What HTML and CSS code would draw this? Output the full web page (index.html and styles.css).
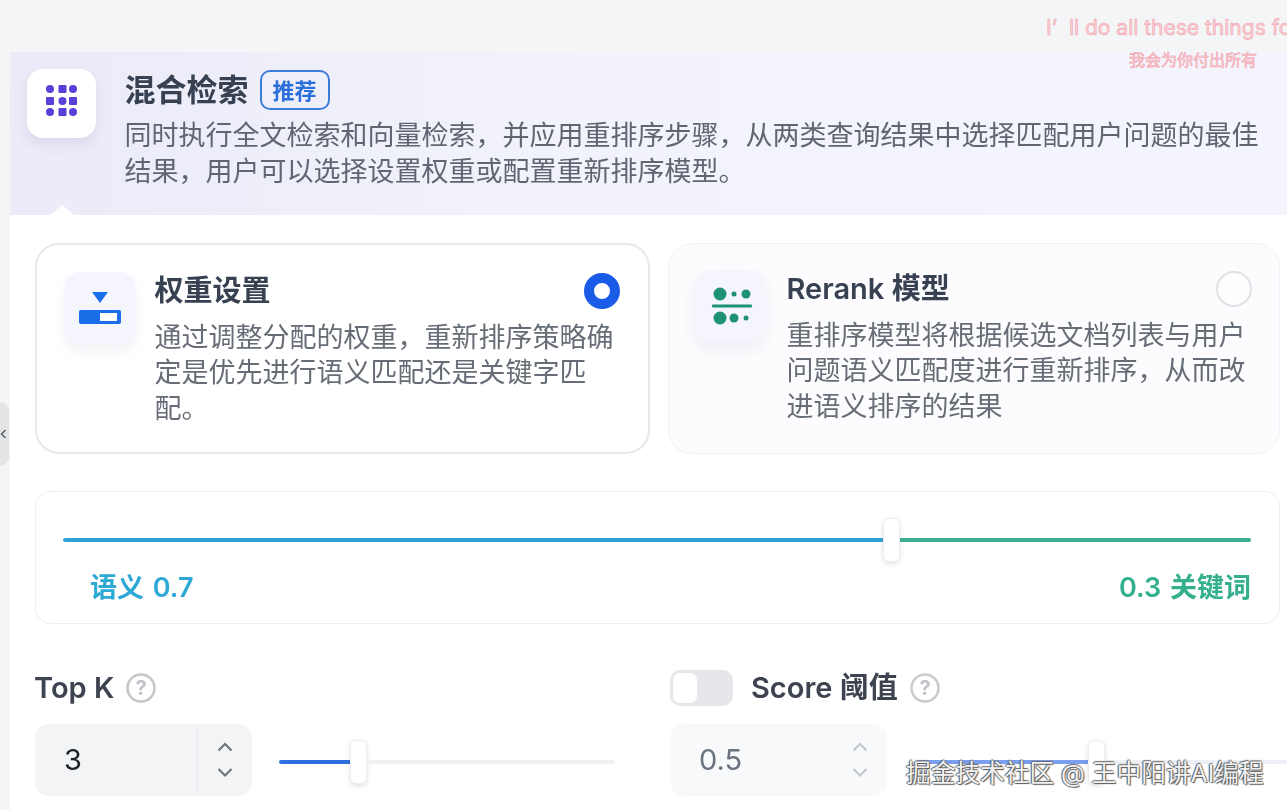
FILE: index.html
```html
<!DOCTYPE html>
<html lang="zh-CN">
<head>
<meta charset="utf-8">
<title>混合检索</title>
<link rel="stylesheet" href="styles.css">
</head>
<body>
<div class="page">
  <div class="topbar"></div>
  <div class="main">
    <div class="gutter"></div>
    <section class="panel">
      <header class="hero">
        <div class="hero-icon">
          <svg width="36" height="36" viewBox="0 0 36 36" fill="#5a3fd8">
            <circle cx="5" cy="5" r="4"/><rect x="13.500" y="1" width="8" height="8" rx="1"/><circle cx="28" cy="5" r="4"/>
            <rect x="1" y="13" width="8" height="8" rx="1"/><circle cx="17.500" cy="17" r="4"/><rect x="24" y="13" width="8" height="8" rx="1"/>
            <circle cx="5" cy="28" r="4"/><rect x="13.500" y="24" width="8" height="8" rx="1"/><circle cx="28" cy="28" r="4"/>
          </svg>
        </div>
        <div class="hero-text">
          <div class="hero-title"><h1>混合检索</h1><span class="badge">推荐</span></div>
          <p class="hero-desc">同时执行全文检索和向量检索，并应用重排序步骤，从两类查询结果中选择匹配用户问题的最佳结果，用户可以选择设置权重或配置重新排序模型。</p>
        </div>
        <span class="notch"></span>
      </header>

      <div class="cards">
        <article class="card card-on">
          <div class="card-icon">
            <svg width="72" height="72" viewBox="0 0 72 72">
              <path d="M28 20h16l-8 11z" fill="#1c6de8"/>
              <rect x="15" y="38" width="42" height="14" rx="2" fill="#1c6de8"/>
              <rect x="36" y="41" width="17" height="8" fill="#fff"/>
            </svg>
          </div>
          <div class="card-body">
            <div class="card-head"><h2>权重设置</h2><span class="radio radio-on"></span></div>
            <p>通过调整分配的权重，重新排序策略确定是优先进行语义匹配还是关键字匹配。</p>
          </div>
        </article>
        <article class="card card-off">
          <div class="card-icon">
            <svg width="72" height="72" viewBox="0 0 72 72" fill="#1e9273">
              <circle cx="26" cy="24" r="6.500"/><circle cx="40" cy="24" r="2.500"/><circle cx="52" cy="24" r="4.500"/>
              <rect x="18" y="34.500" width="40" height="3" rx="1"/>
              <circle cx="26" cy="48" r="6.500"/><circle cx="40" cy="48" r="4.500"/><circle cx="52" cy="48" r="2.500"/>
            </svg>
          </div>
          <div class="card-body">
            <div class="card-head"><h2>Rerank 模型</h2><span class="radio"></span></div>
            <p>重排序模型将根据候选文档列表与用户问题语义匹配度进行重新排序，从而改进语义排序的结果</p>
          </div>
        </article>
      </div>

      <div class="weight">
        <div class="slider">
          <span class="bar fill-sem"></span>
          <span class="thumb"></span>
          <span class="bar rest-key"></span>
        </div>
        <div class="weight-labels">
          <span class="lab-sem">语义 0.7</span>
          <span class="lab-key">0.3 关键词</span>
        </div>
      </div>

      <div class="params">
        <div class="param param-k">
          <div class="param-head">
            <span class="param-name">Top K</span>
            <svg class="help" width="30" height="30" viewBox="0 0 30 30"><circle cx="15" cy="15" r="13.500" fill="none" stroke="#c4c6c9" stroke-width="2.500"/><text x="15" y="21.500" text-anchor="middle" class="help-q">?</text></svg>
          </div>
          <div class="param-ctl">
            <div class="num">
              <span class="num-val">3</span>
              <span class="steps">
                <svg width="16" height="36" viewBox="0 0 16 36" fill="none" stroke="#6b7075" stroke-width="2"><path d="M1.500 8.500L8 2l6.500 6.500M1.500 27L8 33.500 14.500 27"/></svg>
              </span>
            </div>
            <div class="slider slider-k">
              <span class="bar fill-k"></span>
              <span class="thumb"></span>
              <span class="bar rest-k"></span>
            </div>
          </div>
        </div>
        <div class="param param-s">
          <div class="param-head">
            <span class="toggle"><span class="knob"></span></span>
            <span class="param-name">Score 阈值</span>
            <svg class="help" width="30" height="30" viewBox="0 0 30 30"><circle cx="15" cy="15" r="13.500" fill="none" stroke="#c9cbce" stroke-width="2.500"/><text x="15" y="21.500" text-anchor="middle" class="help-q">?</text></svg>
          </div>
          <div class="param-ctl">
            <div class="num num-dis">
              <span class="num-val">0.5</span>
              <span class="steps">
                <svg width="16" height="36" viewBox="0 0 16 36" fill="none" stroke="#c3c7cc" stroke-width="2"><path d="M1.500 8.500L8 2l6.500 6.500M1.500 27L8 33.500 14.500 27"/></svg>
              </span>
            </div>
            <div class="slider slider-s">
              <span class="bar fill-s"></span>
              <span class="thumb"></span>
              <span class="bar rest-s"></span>
            </div>
          </div>
        </div>
      </div>
    </section>
  </div>
</div>
<div class="side-tab"><svg width="8" height="10" viewBox="0 0 8 10" fill="none" stroke="#55585c" stroke-width="1.400"><path d="M5.500 1L1.500 5l4 4"/></svg></div>
<div class="sub sub-en">I’&nbsp;&nbsp;ll do all these things for you</div>
<div class="sub sub-zh">我会为你付出所有</div>
<div class="mark">掘金技术社区 @ 王中阳讲AI编程</div>
</body>
</html>
```

FILE: styles.css
```css
* { box-sizing: border-box; }
html, body { margin: 0; height: 810px; overflow: hidden; }
body {
  position: relative;
  background: #f4f5f7;
  font-family: Inter, "Noto Sans CJK SC", sans-serif;
  color: #374151;
}
h1, h2, p { margin: 0; }

.page { display: flex; flex-direction: column; height: 810px; filter: blur(0.35px); }
.topbar { height: 52px; flex: none; }
.main { display: flex; flex: 1; min-height: 0; }
.gutter { width: 10px; flex: none; }
.panel { flex: 1; min-width: 0; background: #fff; overflow: hidden; }

.hero {
  position: relative;
  display: flex;
  gap: 28.500px;
  height: 163px;
  padding: 17px 20px 0 17px;
  background: linear-gradient(90deg, #ebebf9 0%, #f2f2fb 40%, #f4f5fc 100%);
}
.hero-icon {
  flex: none;
  width: 69px;
  height: 69px;
  display: flex;
  align-items: center;
  justify-content: center;
  background: #fff;
  border-radius: 16px;
  box-shadow: 0 6px 14px rgba(70, 70, 120, 0.12);
}
.hero-icon svg { margin: -3px 0 0 3px; }
.hero-text { flex: 1; min-width: 0; }
.hero-title { display: flex; align-items: center; gap: 11px; height: 40px; margin-top: 1px; }
.hero-title h1 { font-size: 31px; line-height: 40px; font-weight: 700; color: #374151; }
.badge {
  display: flex;
  align-items: center;
  justify-content: center;
  width: 70px;
  height: 40px;
  padding-bottom: 2px;
  border: 2px solid #3f7bd9;
  border-radius: 10px;
  font-size: 22px;
  font-weight: 700;
  color: #2a6fdb;
}
.hero-desc { margin-top: 8px; font-size: 27px; line-height: 36px; color: #5f6671; }
.notch {
  position: absolute;
  left: 40px;
  bottom: 0;
  width: 0;
  height: 0;
  border-left: 12px solid transparent;
  border-right: 12px solid transparent;
  border-bottom: 10px solid #fff;
}

.cards {
  display: grid;
  grid-template-columns: 615px 612px;
  gap: 18px;
  margin: 28px 0 0 25px;
}
.card { display: flex; height: 211px; border-radius: 24px; }
.card-on { border: 2px solid #e6e8eb; background: #fff; padding: 27px 28px 0 27px; gap: 18.500px; }
.card-off { border: 1px solid #f1f2f5; background: #fcfcfe; padding: 26px 27px 0 25px; gap: 20.500px; }
.card-icon {
  flex: none;
  width: 72px;
  height: 72px;
  background: #f5f5fd;
  border-radius: 16px;
  box-shadow: 0 8px 14px rgba(90, 90, 140, 0.07);
}
.card-icon svg { display: block; }
.card-body { flex: 1; min-width: 0; }
.card-head { display: flex; align-items: center; justify-content: space-between; height: 38px; }
.card-head h2 { font-size: 29px; line-height: 38px; font-weight: 600; color: #374151; }
.card-body p { margin-top: 9.500px; font-size: 27px; line-height: 35.500px; color: #676d76; }
.radio {
  flex: none;
  width: 36px;
  height: 36px;
  border-radius: 50%;
  border: 2px solid #e0e2e5;
  background: #fdfdfe;
}
.radio-on { border: 10.500px solid #1a5ce8; background: #fff; }

.weight {
  height: 133px;
  margin: 37px 7px 0 25px;
  padding: 26px 28px 0 27px;
  border: 1px solid #eceef1;
  border-radius: 16px;
  background: #fff;
}
.slider { display: flex; align-items: center; height: 44px; }
.bar { display: block; height: 4px; }
.thumb {
  flex: none;
  width: 17px;
  height: 44px;
  background: #fff;
  border: 1px solid #eceef1;
  border-radius: 6px;
  box-shadow: 0 2px 5px rgba(0, 0, 0, 0.12);
}
.fill-sem { flex: none; width: 820px; background: #2fa3d6; border-radius: 2px 0 0 2px; }
.rest-key { flex: 1; background: #3aae90; border-radius: 0 2px 2px 0; }
.weight-labels {
  display: flex;
  justify-content: space-between;
  margin-top: 8px;
  padding-left: 27px;
  font-size: 27px;
  line-height: 36px;
  font-weight: 600;
  word-spacing: 2px;
}
.lab-sem { color: #2ea8d5; }
.lab-key { color: #35b08f; }

.params { display: flex; margin: 46px 0 0 25px; }
.param { flex: none; }
.param-k { width: 635px; }
.param-s { width: 640px; }
.param-head { display: flex; align-items: center; height: 36px; }
.param-name { font-size: 29px; line-height: 36px; font-weight: 600; color: #3d4450; }
.param-k .param-name { margin-left: -1px; }
.help { flex: none; margin-left: 12px; }
.help-q { font-family: Inter, sans-serif; font-size: 20px; font-weight: 700; fill: #bfc2c6; }
.toggle {
  flex: none;
  display: flex;
  align-items: center;
  width: 63px;
  height: 36px;
  margin-right: 18px;
  padding: 0 3px;
  background: #e5e7eb;
  border-radius: 10px;
}
.knob { width: 24px; height: 30px; background: #fff; border-radius: 7px; }
.param-ctl { display: flex; align-items: center; gap: 27px; margin-top: 18px; }
.num {
  flex: none;
  display: flex;
  align-items: stretch;
  width: 217px;
  height: 72px;
  background: #f2f4f6;
  border-radius: 14px;
}
.num-val { flex: 1; padding-left: 29px; font-size: 29px; line-height: 72px; color: #1f2328; }
.steps {
  flex: none;
  display: flex;
  align-items: center;
  justify-content: center;
  width: 55px;
  border-left: 1px solid #e8eaed;
}
.num-dis { background: #f8f9fb; }
.num-dis .num-val { color: #6b7280; }
.num-dis .steps { border-left-color: #f8f9fb; }
.slider-k { flex: none; width: 336px; margin-top: 4px; }
.fill-k { flex: none; width: 71px; background: #2f6fe0; border-radius: 2px 0 0 2px; }
.rest-k { flex: 1; background: #f0f1f3; }
.slider-s { flex: none; width: 370px; margin: 4px 0 0 3px; }
.fill-s { flex: none; width: 171px; background: #7a9fee; }
.rest-s { flex: 1; background: #edf0f5; }

.side-tab {
  position: absolute;
  left: 0;
  top: 402px;
  width: 9px;
  height: 64px;
  display: flex;
  align-items: center;
  background: #e3e4e6;
  border-radius: 0 12px 12px 0;
}
.side-tab svg { flex: none; }
.sub { position: absolute; white-space: nowrap; color: #fad0d5; -webkit-text-stroke: 0.6px #f2a5af; }
.sub-en { left: 1046px; top: 14px; font-size: 21px; line-height: 28px; }
.sub-zh { left: 1129px; top: 49px; font-size: 16px; line-height: 22px; }
.mark {
  position: absolute;
  left: 906px;
  top: 757px;
  white-space: nowrap;
  font-size: 24.700px;
  line-height: 32px;
  color: #f2f2f2;
  text-shadow: 1px 1px 1px #555, -1px 0 1px #555, 0 -1px 1px #666;
}
```
